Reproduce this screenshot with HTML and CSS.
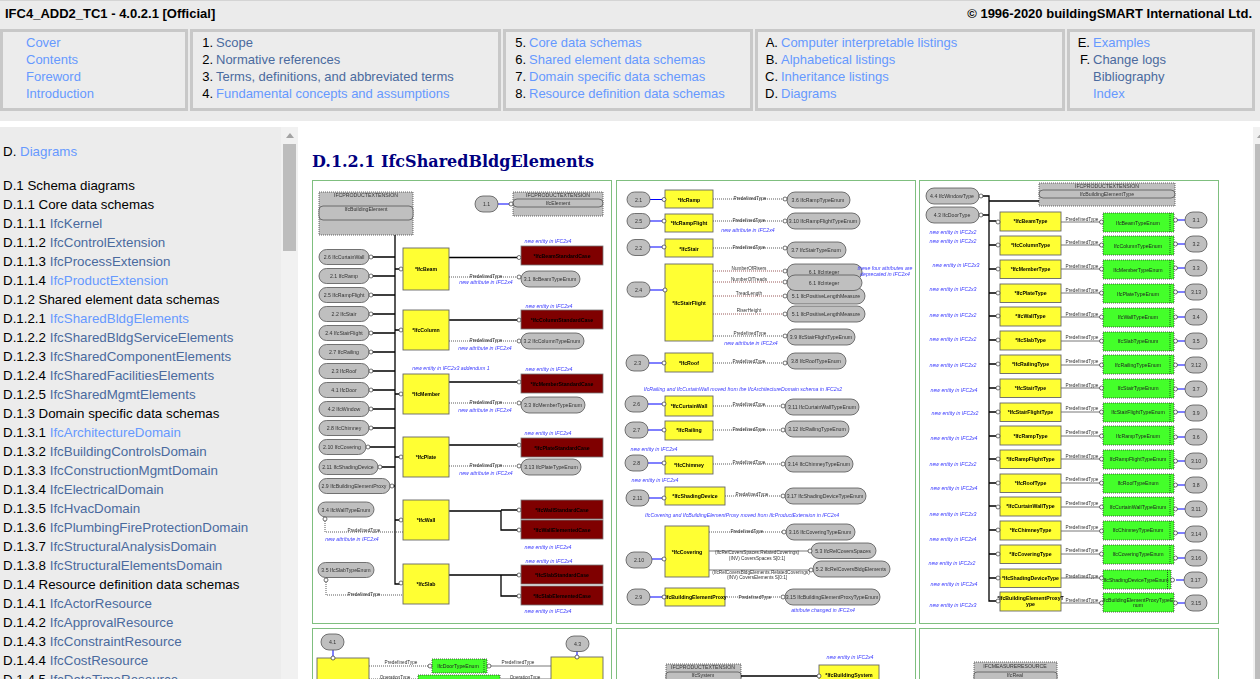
FILE: index.html
```html
<!DOCTYPE html>
<html lang="en">
<head>
  <meta charset="UTF-8">
  <meta name="viewport" content="width=device-width, initial-scale=1.0">
  <title>IfcSharedBldgElements</title>
  <link rel="stylesheet" href="styles.css">
</head>
<body>
  <div class="top">
    <div class="top-head">
      <span>IFC4_ADD2_TC1 - 4.0.2.1 [Official]</span>
      <span>© 1996-2020 buildingSMART International Ltd.</span>
    </div>
    <div class="nav">
      <div class="nav-box">
        <div class="nav-row"><i></i><a class="on" href="#">Cover</a></div>
        <div class="nav-row"><i></i><a class="on" href="#">Contents</a></div>
        <div class="nav-row"><i></i><a class="on" href="#">Foreword</a></div>
        <div class="nav-row"><i></i><a class="on" href="#">Introduction</a></div>
      </div>
      <div class="nav-box">
        <div class="nav-row"><i>1.</i><a class="off" href="#">Scope</a></div>
        <div class="nav-row"><i>2.</i><a class="off" href="#">Normative references</a></div>
        <div class="nav-row"><i>3.</i><a class="off" href="#">Terms, definitions, and abbreviated terms</a></div>
        <div class="nav-row"><i>4.</i><a class="on" href="#">Fundamental concepts and assumptions</a></div>
      </div>
      <div class="nav-box">
        <div class="nav-row"><i>5.</i><a class="on" href="#">Core data schemas</a></div>
        <div class="nav-row"><i>6.</i><a class="on" href="#">Shared element data schemas</a></div>
        <div class="nav-row"><i>7.</i><a class="on" href="#">Domain specific data schemas</a></div>
        <div class="nav-row"><i>8.</i><a class="on" href="#">Resource definition data schemas</a></div>
      </div>
      <div class="nav-box">
        <div class="nav-row"><i>A.</i><a class="on" href="#">Computer interpretable listings</a></div>
        <div class="nav-row"><i>B.</i><a class="on" href="#">Alphabetical listings</a></div>
        <div class="nav-row"><i>C.</i><a class="on" href="#">Inheritance listings</a></div>
        <div class="nav-row"><i>D.</i><a class="on" href="#">Diagrams</a></div>
      </div>
      <div class="nav-box">
        <div class="nav-row"><i>E.</i><a class="on" href="#">Examples</a></div>
        <div class="nav-row"><i>F.</i><a class="off" href="#">Change logs</a></div>
        <div class="nav-row"><i></i><a class="off" href="#">Bibliography</a></div>
        <div class="nav-row"><i></i><a class="on" href="#">Index</a></div>
      </div>
    </div>
  </div>

  <div class="frames">
    <div class="side">
      <div class="side-list">
        <div class="side-row side-title">D. <a class="on" href="#">Diagrams</a></div>
        <div class="side-row">D.1 Schema diagrams</div>
        <div class="side-row">D.1.1 Core data schemas</div>
        <div class="side-row">D.1.1.1 <a class="off" href="#">IfcKernel</a></div>
        <div class="side-row">D.1.1.2 <a class="off" href="#">IfcControlExtension</a></div>
        <div class="side-row">D.1.1.3 <a class="off" href="#">IfcProcessExtension</a></div>
        <div class="side-row">D.1.1.4 <a class="on" href="#">IfcProductExtension</a></div>
        <div class="side-row">D.1.2 Shared element data schemas</div>
        <div class="side-row">D.1.2.1 <a class="on" href="#">IfcSharedBldgElements</a></div>
        <div class="side-row">D.1.2.2 <a class="off" href="#">IfcSharedBldgServiceElements</a></div>
        <div class="side-row">D.1.2.3 <a class="off" href="#">IfcSharedComponentElements</a></div>
        <div class="side-row">D.1.2.4 <a class="off" href="#">IfcSharedFacilitiesElements</a></div>
        <div class="side-row">D.1.2.5 <a class="off" href="#">IfcSharedMgmtElements</a></div>
        <div class="side-row">D.1.3 Domain specific data schemas</div>
        <div class="side-row">D.1.3.1 <a class="on" href="#">IfcArchitectureDomain</a></div>
        <div class="side-row">D.1.3.2 <a class="off" href="#">IfcBuildingControlsDomain</a></div>
        <div class="side-row">D.1.3.3 <a class="off" href="#">IfcConstructionMgmtDomain</a></div>
        <div class="side-row">D.1.3.4 <a class="off" href="#">IfcElectricalDomain</a></div>
        <div class="side-row">D.1.3.5 <a class="off" href="#">IfcHvacDomain</a></div>
        <div class="side-row">D.1.3.6 <a class="off" href="#">IfcPlumbingFireProtectionDomain</a></div>
        <div class="side-row">D.1.3.7 <a class="off" href="#">IfcStructuralAnalysisDomain</a></div>
        <div class="side-row">D.1.3.8 <a class="off" href="#">IfcStructuralElementsDomain</a></div>
        <div class="side-row">D.1.4 Resource definition data schemas</div>
        <div class="side-row">D.1.4.1 <a class="off" href="#">IfcActorResource</a></div>
        <div class="side-row">D.1.4.2 <a class="off" href="#">IfcApprovalResource</a></div>
        <div class="side-row">D.1.4.3 <a class="off" href="#">IfcConstraintResource</a></div>
        <div class="side-row">D.1.4.4 <a class="off" href="#">IfcCostResource</a></div>
        <div class="side-row">D.1.4.5 <a class="off" href="#">IfcDateTimeResource</a></div>
      </div>
      <div class="bar"><div class="bar-up"></div><div class="bar-thumb"></div></div>
    </div>

    <div class="main">
      <div class="content">
        <h1>D.1.2.1 IfcSharedBldgElements</h1>
        <div class="diagrams">

          <!-- panel 1: viewBox uses page coords, easier to line up -->
          <svg class="dg" viewBox="312 180 300 444">
            <rect class="schema" x="319" y="192" width="94" height="43"/>
            <rect class="pill" x="319" y="206" width="94" height="14" rx="4"/>
            <text class="t" x="366" y="197">IFCPRODUCTEXTENSION</text>
            <text class="t" x="366" y="211">IfcBuildingElement</text>
            <rect class="schema" x="513" y="192" width="90" height="24"/>
            <rect class="pill" x="513" y="199" width="90" height="8" rx="4"/>
            <text class="t" x="558" y="197">IFCPRODUCTEXTENSION</text>
            <text class="t" x="558" y="205">IfcElement</text>
            <path class="thick" d="M498 204H510"/>
            <rect class="pill" x="475" y="196" width="23" height="16" rx="8"/>
            <text class="t" x="486.500" y="206">1.1</text>
            <circle class="c" cx="511" cy="204" r="2"/>

            <path class="blk" d="M395 235V584H401M371 257H395M371 276H395M371 295H395M371 314H395M371 333H395M371 352H395M371 371H395M371 390H395M371 409H395M371 428H395M368 447H395M380 467H395M392 486H395M395 269H401M395 330H401M395 394H401M395 457H401M395 520H401"/>
            <path class="blk" d="M449 257.500H519M449 320H519M449 382H519M449 445H519M449 511H501V530H519M501 510H519M449 575H501V596H519M501 575H519"/>
            <path class="dot" d="M449 277H519M449 341H519M449 403H519M449 466H519M325 519V532H403M326 580V595H403"/>

            <rect class="pill" x="319" y="249.500" width="50" height="15" rx="7.500"/><text class="t" x="344" y="259">2.6 IfcCurtainWall</text>
            <rect class="pill" x="319" y="268.500" width="50" height="15" rx="7.500"/><text class="t" x="344" y="278">2.1 IfcRamp</text>
            <rect class="pill" x="319" y="287.500" width="50" height="15" rx="7.500"/><text class="t" x="344" y="297">2.5 IfcRampFlight</text>
            <rect class="pill" x="319" y="306.500" width="50" height="15" rx="7.500"/><text class="t" x="344" y="316">2.2 IfcStair</text>
            <rect class="pill" x="319" y="325.500" width="50" height="15" rx="7.500"/><text class="t" x="344" y="335">2.4 IfcStairFlight</text>
            <rect class="pill" x="319" y="344.500" width="50" height="15" rx="7.500"/><text class="t" x="344" y="354">2.7 IfcRailing</text>
            <rect class="pill" x="319" y="363.500" width="50" height="15" rx="7.500"/><text class="t" x="344" y="373">2.3 IfcRoof</text>
            <rect class="pill" x="319" y="382.500" width="50" height="15" rx="7.500"/><text class="t" x="344" y="392">4.1 IfcDoor</text>
            <rect class="pill" x="319" y="401.500" width="50" height="15" rx="7.500"/><text class="t" x="344" y="411">4.2 IfcWindow</text>
            <rect class="pill" x="319" y="420.500" width="50" height="15" rx="7.500"/><text class="t" x="344" y="430">2.8 IfcChimney</text>
            <rect class="pill" x="319" y="439.500" width="47" height="15" rx="7.500"/><text class="t" x="342" y="449">2.10 IfcCovering</text>
            <rect class="pill" x="319" y="459.500" width="59" height="15" rx="7.500"/><text class="t" x="348" y="469">2.11 IfcShadingDevice</text>
            <rect class="pill" x="319" y="478.500" width="71" height="15" rx="7.500"/><text class="t" x="354" y="488">2.9 IfcBuildingElementProxy</text>
            <rect class="pill" x="318" y="502" width="56" height="15" rx="7.500"/><text class="t" x="346" y="511.500">3.4 IfcWallTypeEnum</text>
            <rect class="pill" x="318" y="562.500" width="56" height="15" rx="7.500"/><text class="t" x="346" y="572">3.5 IfcSlabTypeEnum</text>
            <g class="cs">
              <circle cx="371" cy="257" r="2"/><circle cx="371" cy="276" r="2"/><circle cx="371" cy="295" r="2"/><circle cx="371" cy="314" r="2"/><circle cx="371" cy="333" r="2"/><circle cx="371" cy="352" r="2"/><circle cx="371" cy="371" r="2"/><circle cx="371" cy="390" r="2"/><circle cx="371" cy="409" r="2"/><circle cx="371" cy="428" r="2"/><circle cx="368" cy="447" r="2"/><circle cx="380" cy="467" r="2"/><circle cx="392" cy="486" r="2"/><circle cx="325" cy="519" r="2"/><circle cx="326" cy="580" r="2"/>
              <circle cx="401" cy="269" r="2"/><circle cx="401" cy="330" r="2"/><circle cx="401" cy="394" r="2"/><circle cx="401" cy="457" r="2"/><circle cx="401" cy="520" r="2"/><circle cx="401" cy="583" r="2"/>
              <circle cx="519" cy="257.500" r="2"/><circle cx="519" cy="277" r="2"/><circle cx="519" cy="320" r="2"/><circle cx="519" cy="341" r="2"/><circle cx="519" cy="382" r="2"/><circle cx="519" cy="403" r="2"/><circle cx="519" cy="445" r="2"/><circle cx="519" cy="466" r="2"/><circle cx="519" cy="510" r="2"/><circle cx="519" cy="530" r="2"/><circle cx="519" cy="575" r="2"/><circle cx="519" cy="596" r="2"/>
            </g>

            <rect class="ent" x="403" y="248" width="46" height="42"/><text class="b" x="426" y="271">*IfcBeam</text>
            <rect class="ent" x="403" y="310" width="46" height="40"/><text class="b" x="426" y="332">*IfcColumn</text>
            <rect class="ent" x="403" y="374" width="46" height="40"/><text class="b" x="426" y="396">*IfcMember</text>
            <rect class="ent" x="403" y="437" width="46" height="40"/><text class="b" x="426" y="459">*IfcPlate</text>
            <rect class="ent" x="403" y="500" width="46" height="40"/><text class="b" x="426" y="522">*IfcWall</text>
            <rect class="ent" x="403" y="564" width="46" height="40"/><text class="b" x="426" y="586">*IfcSlab</text>

            <rect class="dark" x="521" y="246" width="82" height="19"/><text class="b" x="562" y="258">*IfcBeamStandardCase</text>
            <rect class="dark" x="521" y="310" width="82" height="19"/><text class="b" x="562" y="322">*IfcColumnStandardCase</text>
            <rect class="dark" x="521" y="374" width="82" height="19"/><text class="b" x="562" y="386">*IfcMemberStandardCase</text>
            <rect class="dark" x="521" y="438" width="82" height="19"/><text class="b" x="562" y="450">*IfcPlateStandardCase</text>
            <rect class="dark" x="521" y="500" width="82" height="19"/><text class="b" x="562" y="512">*IfcWallStandardCase</text>
            <rect class="dark" x="521" y="520" width="82" height="19"/><text class="b" x="562" y="532">*IfcWallElementedCase</text>
            <rect class="dark" x="521" y="565" width="82" height="19"/><text class="b" x="562" y="577">*IfcSlabStandardCase</text>
            <rect class="dark" x="521" y="586" width="82" height="19"/><text class="b" x="562" y="598">*IfcSlabElementedCase</text>

            <rect class="pill" x="521" y="271" width="59" height="16" rx="8"/><text class="t" x="550" y="281">3.1 IfcBeamTypeEnum</text>
            <rect class="pill" x="521" y="333" width="63" height="16" rx="8"/><text class="t" x="552" y="343">3.2 IfcColumnTypeEnum</text>
            <rect class="pill" x="521" y="397" width="64" height="16" rx="8"/><text class="t" x="553" y="407">3.3 IfcMemberTypeEnum</text>
            <rect class="pill" x="521" y="459" width="60" height="16" rx="8"/><text class="t" x="551" y="469">3.13 IfcPlateTypeEnum</text>

            <text class="l" x="486" y="278">PredefinedType</text>
            <text class="l" x="486" y="342">PredefinedType</text>
            <text class="l" x="486" y="404">PredefinedType</text>
            <text class="l" x="486" y="467">PredefinedType</text>
            <text class="l" x="364" y="532">PredefinedType</text>
            <text class="l" x="364" y="596">PredefinedType</text>

            <text class="n" x="548" y="243">new entity in IFC2x4</text>
            <text class="n" x="549" y="308">new entity in IFC2x4</text>
            <text class="n" x="549" y="371">new entity in IFC2x4</text>
            <text class="n" x="548" y="435">new entity in IFC2x4</text>
            <text class="n" x="548" y="549">new entity in IFC2x4</text>
            <text class="n" x="549" y="563">new entity in IFC2x4</text>
            <text class="n" x="548" y="613">new entity in IFC2x4</text>
            <text class="n" x="451" y="370">new entity in IFC2x3 addendum 1</text>
            <text class="n" x="486" y="284">new attribute in IFC2x4</text>
            <text class="n" x="485" y="350">new attribute in IFC2x4</text>
            <text class="n" x="485" y="412">new attribute in IFC2x4</text>
            <text class="n" x="486" y="475">new attribute in IFC2x4</text>
            <text class="n" x="352" y="541">new attribute in IFC2x4</text>
          </svg>

          <!-- panel 2 -->
          <svg class="dg" viewBox="616 180 300 444">
            <path class="blu" d="M650 199.500H664M649 247H664M649 363H664M648 404H664M648 430H664M649 498H664M652 559H664M650 597H664"/>
            <path class="thick" d="M650 221H664M650 290H664M648 463H664"/>
            <path class="dot" d="M713 199H785M713 221H785M713 248H785M713 336H785M713 363H785M713 406H785M713 430H785M713 464H785M725 496H785M709 532H785M725 597H785"/>
            <path class="red" d="M713 271H785M713 282H785M713 296H785M713 314H785"/>
            <path class="gry" d="M709 551H809M709 570H811"/>

            <rect class="pill" x="627" y="192" width="23" height="15" rx="7.500"/><text class="t" x="638.500" y="201.500">2.1</text>
            <rect class="pill" x="627" y="213.500" width="23" height="15" rx="7.500"/><text class="t" x="638.500" y="223">2.5</text>
            <rect class="pill" x="627" y="239.500" width="23" height="16" rx="8"/><text class="t" x="638.500" y="249.500">2.2</text>
            <rect class="pill" x="627" y="282" width="23" height="15" rx="7.500"/><text class="t" x="638.500" y="291.500">2.4</text>
            <rect class="pill" x="626" y="355" width="23" height="16" rx="8"/><text class="t" x="637.500" y="365">2.3</text>
            <rect class="pill" x="625" y="396" width="23" height="16" rx="8"/><text class="t" x="636.500" y="406">2.6</text>
            <rect class="pill" x="625" y="422" width="23" height="16" rx="8"/><text class="t" x="636.500" y="432">2.7</text>
            <rect class="pill" x="625" y="455" width="23" height="16" rx="8"/><text class="t" x="636.500" y="465">2.8</text>
            <rect class="pill" x="626" y="490" width="23" height="16" rx="8"/><text class="t" x="637.500" y="500">2.11</text>
            <rect class="pill" x="626" y="552" width="26" height="16" rx="8"/><text class="t" x="639" y="562">2.10</text>
            <rect class="pill" x="627" y="589" width="23" height="16" rx="8"/><text class="t" x="638.500" y="599">2.9</text>

            <rect class="ent" x="665" y="190" width="48" height="18"/><text class="b" x="689" y="202">*IfcRamp</text>
            <rect class="ent" x="665" y="214" width="48" height="18"/><text class="b" x="689" y="225">*IfcRampFlight</text>
            <rect class="ent" x="665" y="239" width="48" height="18"/><text class="b" x="689" y="251">*IfcStair</text>
            <rect class="ent" x="665" y="264" width="48" height="77"/><text class="b" x="689" y="305">*IfcStairFlight</text>
            <rect class="ent" x="665" y="353" width="48" height="19"/><text class="b" x="689" y="365">*IfcRoof</text>
            <rect class="ent" x="665" y="396" width="48" height="20"/><text class="b" x="689" y="408">*IfcCurtainWall</text>
            <rect class="ent" x="665" y="421" width="48" height="19"/><text class="b" x="689" y="432">*IfcRailing</text>
            <rect class="ent" x="665" y="456" width="48" height="18"/><text class="b" x="689" y="467">*IfcChimney</text>
            <rect class="ent" x="665" y="487" width="60" height="18"/><text class="b" x="695" y="498">*IfcShadingDevice</text>
            <rect class="ent" x="665" y="526" width="44" height="51"/><text class="b" x="687" y="554">*IfcCovering</text>
            <rect class="ent" x="665" y="588" width="60" height="18"/><text class="b" x="695" y="599">*IfcBuildingElementProxy</text>

            <rect class="pill" x="787" y="192" width="63" height="16" rx="8"/><text class="t" x="818" y="202">3.6 IfcRampTypeEnum</text>
            <rect class="pill" x="787" y="213" width="73" height="16" rx="8"/><text class="t" x="823" y="223">3.10 IfcRampFlightTypeEnum</text>
            <rect class="pill" x="787" y="242" width="59" height="16" rx="8"/><text class="t" x="816" y="252">3.7 IfcStairTypeEnum</text>
            <rect class="pill" x="787" y="264" width="75" height="16" rx="8"/><text class="t" x="824" y="274">6.1 IfcInteger</text>
            <rect class="pill" x="787" y="288" width="78" height="16" rx="8"/><text class="t" x="826" y="298">5.1 IfcPositiveLengthMeasure</text>
            <rect class="pill" x="787" y="275" width="75" height="15.500" rx="8"/><text class="t" x="824" y="285">6.1 IfcInteger</text>
            <rect class="pill" x="787" y="306" width="78" height="16" rx="8"/><text class="t" x="826" y="316">5.1 IfcPositiveLengthMeasure</text>
            <rect class="pill" x="787" y="329" width="68" height="16" rx="8"/><text class="t" x="821" y="339">3.9 IfcStairFlightTypeEnum</text>
            <rect class="pill" x="787" y="353" width="59" height="16" rx="8"/><text class="t" x="816" y="363">3.8 IfcRoofTypeEnum</text>
            <rect class="pill" x="785" y="399" width="74" height="16" rx="8"/><text class="t" x="822" y="409">3.11 IfcCurtainWallTypeEnum</text>
            <rect class="pill" x="785" y="421" width="64" height="16" rx="8"/><text class="t" x="817" y="431">3.12 IfcRailingTypeEnum</text>
            <rect class="pill" x="785" y="456" width="68" height="16" rx="8"/><text class="t" x="819" y="466">3.14 IfcChimneyTypeEnum</text>
            <rect class="pill" x="785" y="488" width="81" height="16" rx="8"/><text class="t" x="825" y="498">3.17 IfcShadingDeviceTypeEnum</text>
            <rect class="pill" x="786" y="524" width="69" height="16" rx="8"/><text class="t" x="820" y="534">3.16 IfcCoveringTypeEnum</text>
            <rect class="pill" x="811" y="543" width="65" height="15.500" rx="8"/><text class="t" x="843" y="553">5.3 IfcRelCoversSpaces</text>
            <rect class="pill" x="813" y="561" width="77" height="16" rx="8"/><text class="t" x="851" y="571">5.2 IfcRelCoversBldgElements</text>
            <rect class="pill" x="785" y="589" width="95" height="16" rx="8"/><text class="t" x="832" y="599">3.15 IfcBuildingElementProxyTypeEnum</text>

            <g class="cs">
              <circle cx="664" cy="199.500" r="2"/><circle cx="664" cy="221" r="2"/><circle cx="664" cy="247" r="2"/><circle cx="665" cy="290" r="2"/><circle cx="664" cy="363" r="2"/><circle cx="664" cy="404" r="2"/><circle cx="664" cy="430" r="2"/><circle cx="664" cy="463" r="2"/><circle cx="664" cy="498" r="2"/><circle cx="664" cy="559" r="2"/><circle cx="664" cy="597" r="2"/>
              <circle cx="785" cy="199" r="2"/><circle cx="785" cy="221" r="2"/><circle cx="785" cy="248" r="2"/><circle cx="785" cy="271" r="2"/><circle cx="785" cy="282" r="2"/><circle cx="785" cy="296" r="2"/><circle cx="785" cy="314" r="2"/><circle cx="785" cy="336" r="2"/><circle cx="785" cy="363" r="2"/><circle cx="783" cy="406" r="2"/><circle cx="783" cy="430" r="2"/><circle cx="783" cy="464" r="2"/><circle cx="783" cy="496" r="2"/><circle cx="784" cy="532" r="2"/><circle cx="810" cy="551" r="2"/><circle cx="811" cy="570" r="2"/><circle cx="783" cy="597" r="2"/>
            </g>

            <text class="l" x="750" y="200">PredefinedType</text>
            <text class="l" x="749" y="222">PredefinedType</text>
            <text class="l" x="749" y="249">PredefinedType</text>
            <text class="l" x="749" y="270">NumberOfRisers</text>
            <text class="l" x="749" y="281">NumberOfTreads</text>
            <text class="l" x="749" y="295">TreadLength</text>
            <text class="l" x="749" y="312">RiserHeight</text>
            <text class="l" x="750" y="335">PredefinedType</text>
            <text class="l" x="749" y="363">PredefinedType</text>
            <text class="l" x="749" y="406">PredefinedType</text>
            <text class="l" x="749" y="431">PredefinedType</text>
            <text class="l" x="749" y="464">PredefinedType</text>
            <text class="l" x="752" y="496">PredefinedType</text>
            <text class="l" x="747" y="533">PredefinedType</text>
            <text class="l" x="757" y="554">(IfcRelCoversSpaces.RelatedCoverings)</text>
            <text class="l" x="757" y="560">(INV) CoversSpaces S[0:1]</text>
            <text class="l" x="761" y="574">(IfcRelCoversBldgElements.RelatedCoverings)</text>
            <text class="l" x="757" y="579">(INV) CoversElements S[0:1]</text>
            <text class="l" x="755" y="599">PredefinedType</text>

            <text class="n" x="748" y="232">new attribute in IFC2x4</text>
            <text class="n" x="751" y="345">new attribute in IFC2x4</text>
            <text class="n" x="885" y="270">these four attributes are</text>
            <text class="n" x="885" y="276">deprecated in IFC2x4</text>
            <text class="n" x="743" y="391">IfcRailing and IfcCurtainWall moved from the IfcArchitectureDomain schema in IFC2x2</text>
            <text class="n" x="654" y="451">new entity in IFC2x4</text>
            <text class="n" x="655" y="482">new entity in IFC2x4</text>
            <text class="n" x="742" y="517">IfcCovering and IfcBuildingElementProxy moved from IfcProductExtension in IFC2x4</text>
            <text class="n" x="823" y="612">attribute changed in IFC2x4</text>
          </svg>

          <!-- panel 3 -->
          <svg class="dg" viewBox="919 180 300 444">
            <rect class="schema" x="1039" y="183" width="136" height="23"/>
            <rect class="pill" x="1039" y="190" width="136" height="8" rx="4"/>
            <text class="t" x="1107" y="188">IFCPRODUCTEXTENSION</text>
            <text class="t" x="1107" y="196">IfcBuildingElementType</text>
            <rect class="pill" x="926" y="188" width="53" height="16" rx="8"/><text class="t" x="952" y="198">4.4 IfcWindowType</text>
            <rect class="pill" x="926" y="207" width="53" height="16" rx="8"/><text class="t" x="952" y="217">4.3 IfcDoorType</text>
            <path class="blk" d="M981 196H989V601H996M981 215H989M989 201H1039M989 221H996M989 245H996M989 269H996M989 293H996M989 316H996M989 340H996M989 364H996M989 388H996M989 412H996M989 436H996M989 459H996M989 483H996M989 506H996M989 530H996M989 554H996M989 578H996"/>
            <path class="gry" d="M1061 222H1101M1061 245H1101M1061 269H1101M1061 293H1101M1061 317H1101M1061 341H1101M1061 365H1101M1061 388H1101M1061 412H1101M1061 436H1101M1061 459H1101M1061 483H1101M1061 507H1101M1061 531H1101M1061 554H1101M1061 578H1101M1061 603H1101"/>
            <path class="blu" d="M1177 220H1185M1177 244H1185M1177 268H1185M1177 292H1185M1177 412H1185M1177 437H1185M1177 461H1185M1177 485H1185M1177 603H1185"/>
            <path class="thick" d="M1177 317H1185M1177 341H1185M1177 365H1185M1177 389H1185M1177 509H1185M1177 533H1185M1177 558H1185M1176 580H1185"/>

            <rect class="ent" x="1000" y="212" width="61" height="19"/><text class="b" x="1030.500" y="223">*IfcBeamType</text>
            <rect class="ent" x="1000" y="236" width="61" height="19"/><text class="b" x="1030.500" y="247">*IfcColumnType</text>
            <rect class="ent" x="1000" y="260" width="61" height="18.500"/><text class="b" x="1030.500" y="271">*IfcMemberType</text>
            <rect class="ent" x="1000" y="284" width="61" height="18.500"/><text class="b" x="1030.500" y="295">*IfcPlateType</text>
            <rect class="ent" x="1000" y="307" width="61" height="19"/><text class="b" x="1030.500" y="318">*IfcWallType</text>
            <rect class="ent" x="1000" y="331" width="61" height="19"/><text class="b" x="1030.500" y="342">*IfcSlabType</text>
            <rect class="ent" x="1000" y="355" width="61" height="18.500"/><text class="b" x="1030.500" y="366">*IfcRailingType</text>
            <rect class="ent" x="1000" y="379" width="61" height="18.500"/><text class="b" x="1030.500" y="390">*IfcStairType</text>
            <rect class="ent" x="1000" y="403" width="61" height="18.500"/><text class="b" x="1030.500" y="414">*IfcStairFlightType</text>
            <rect class="ent" x="1000" y="426" width="61" height="19"/><text class="b" x="1030.500" y="438">*IfcRampType</text>
            <rect class="ent" x="1000" y="450" width="61" height="18.500"/><text class="b" x="1030.500" y="461">*IfcRampFlightType</text>
            <rect class="ent" x="1000" y="474" width="61" height="18.500"/><text class="b" x="1030.500" y="485">*IfcRoofType</text>
            <rect class="ent" x="1000" y="497" width="61" height="19"/><text class="b" x="1030.500" y="508">*IfcCurtainWallType</text>
            <rect class="ent" x="1000" y="521" width="61" height="19"/><text class="b" x="1030.500" y="532">*IfcChimneyType</text>
            <rect class="ent" x="1000" y="545" width="61" height="18.500"/><text class="b" x="1030.500" y="556">*IfcCoveringType</text>
            <rect class="ent" x="1000" y="569" width="61" height="18.500"/><text class="b" x="1030.500" y="580">*IfcShadingDeviceType</text>
            <rect class="ent" x="1000" y="592" width="61" height="19"/><text class="b" x="1030.500" y="600">*IfcBuildingElementProxyT</text><text class="b" x="1030.500" y="606">ype</text>

            <rect class="grn" x="1103" y="213" width="71" height="19"/><text class="g" x="1138" y="225">IfcBeamTypeEnum</text>
            <rect class="grn" x="1103" y="236" width="71" height="19"/><text class="g" x="1138" y="248">IfcColumnTypeEnum</text>
            <rect class="grn" x="1103" y="260" width="71" height="19"/><text class="g" x="1138" y="272">IfcMemberTypeEnum</text>
            <rect class="grn" x="1103" y="284" width="71" height="19"/><text class="g" x="1138" y="296">IfcPlateTypeEnum</text>
            <rect class="grn" x="1103" y="308" width="71" height="19"/><text class="g" x="1138" y="319">IfcWallTypeEnum</text>
            <rect class="grn" x="1103" y="332" width="71" height="19"/><text class="g" x="1138" y="343">IfcSlabTypeEnum</text>
            <rect class="grn" x="1103" y="355" width="71" height="19"/><text class="g" x="1138" y="367">IfcRailingTypeEnum</text>
            <rect class="grn" x="1103" y="379" width="71" height="19"/><text class="g" x="1138" y="390">IfcStairTypeEnum</text>
            <rect class="grn" x="1103" y="403" width="71" height="19"/><text class="g" x="1138" y="414">IfcStairFlightTypeEnum</text>
            <rect class="grn" x="1103" y="426" width="71" height="19"/><text class="g" x="1138" y="438">IfcRampTypeEnum</text>
            <rect class="grn" x="1103" y="450" width="71" height="19"/><text class="g" x="1138" y="461">IfcRampFlightTypeEnum</text>
            <rect class="grn" x="1103" y="474" width="71" height="19"/><text class="g" x="1138" y="485">IfcRoofTypeEnum</text>
            <rect class="grn" x="1103" y="497" width="71" height="19"/><text class="g" x="1138" y="509">IfcCurtainWallTypeEnum</text>
            <rect class="grn" x="1103" y="521" width="71" height="19"/><text class="g" x="1138" y="532">IfcChimneyTypeEnum</text>
            <rect class="grn" x="1103" y="545" width="71" height="19"/><text class="g" x="1138" y="556">IfcCoveringTypeEnum</text>
            <rect class="grn" x="1103" y="570" width="68" height="19"/><text class="g" x="1136" y="582">IfcShadingDeviceTypeEnum</text>
            <rect class="grn" x="1103" y="593" width="71" height="19"/><text class="g" x="1138" y="602">IfcBuildingElementProxyTypeE</text><text class="g" x="1138" y="607">num</text>
            <path class="strip" d="M1170 213V232M1170 236V255M1170 260V279M1170 284V303M1170 308V327M1170 332V351M1170 355V374M1170 379V398M1170 403V422M1170 426V445M1170 450V469M1170 474V493M1170 497V516M1170 521V540M1170 545V564M1167.500 570V589"/>

            <g class="cs">
              <circle cx="981" cy="196" r="2"/><circle cx="981" cy="215" r="2"/>
              <circle cx="998" cy="222" r="2"/><circle cx="998" cy="245" r="2"/><circle cx="998" cy="269" r="2"/><circle cx="998" cy="293" r="2"/><circle cx="998" cy="316" r="2"/><circle cx="998" cy="340" r="2"/><circle cx="998" cy="364" r="2"/><circle cx="998" cy="388" r="2"/><circle cx="998" cy="412" r="2"/><circle cx="998" cy="436" r="2"/><circle cx="998" cy="459" r="2"/><circle cx="998" cy="483" r="2"/><circle cx="998" cy="507" r="2"/><circle cx="998" cy="530" r="2"/><circle cx="998" cy="554" r="2"/><circle cx="998" cy="578" r="2"/><circle cx="998" cy="601" r="2"/>
              <circle cx="1101.500" cy="222" r="2"/><circle cx="1101.500" cy="245" r="2"/><circle cx="1101.500" cy="269" r="2"/><circle cx="1101.500" cy="293" r="2"/><circle cx="1101.500" cy="317" r="2"/><circle cx="1101.500" cy="341" r="2"/><circle cx="1101.500" cy="365" r="2"/><circle cx="1101.500" cy="388" r="2"/><circle cx="1101.500" cy="412" r="2"/><circle cx="1101.500" cy="436" r="2"/><circle cx="1101.500" cy="459" r="2"/><circle cx="1101.500" cy="483" r="2"/><circle cx="1101.500" cy="507" r="2"/><circle cx="1101.500" cy="531" r="2"/><circle cx="1101.500" cy="554" r="2"/><circle cx="1101.500" cy="578" r="2"/><circle cx="1101.500" cy="603" r="2"/>
              <circle cx="1175.500" cy="220" r="2"/><circle cx="1175.500" cy="244" r="2"/><circle cx="1175.500" cy="268" r="2"/><circle cx="1175.500" cy="292" r="2"/><circle cx="1175.500" cy="317" r="2"/><circle cx="1175.500" cy="341" r="2"/><circle cx="1175.500" cy="365" r="2"/><circle cx="1175.500" cy="389" r="2"/><circle cx="1175.500" cy="412" r="2"/><circle cx="1175.500" cy="437" r="2"/><circle cx="1175.500" cy="461" r="2"/><circle cx="1175.500" cy="485" r="2"/><circle cx="1175.500" cy="509" r="2"/><circle cx="1175.500" cy="533" r="2"/><circle cx="1175.500" cy="558" r="2"/><circle cx="1172.500" cy="580" r="2"/><circle cx="1175.500" cy="603" r="2"/>
            </g>

            <rect class="pill" x="1185" y="212" width="22" height="16" rx="8"/><text class="t" x="1196" y="222">3.1</text>
            <rect class="pill" x="1185" y="236" width="22" height="16" rx="8"/><text class="t" x="1196" y="246">3.2</text>
            <rect class="pill" x="1185" y="260" width="22" height="16" rx="8"/><text class="t" x="1196" y="270">3.3</text>
            <rect class="pill" x="1185" y="284" width="22" height="16" rx="8"/><text class="t" x="1196" y="294">3.13</text>
            <rect class="pill" x="1185" y="309" width="22" height="16" rx="8"/><text class="t" x="1196" y="319">3.4</text>
            <rect class="pill" x="1185" y="333" width="22" height="16" rx="8"/><text class="t" x="1196" y="343">3.5</text>
            <rect class="pill" x="1185" y="357" width="22" height="16" rx="8"/><text class="t" x="1196" y="367">3.12</text>
            <rect class="pill" x="1185" y="381" width="22" height="16" rx="8"/><text class="t" x="1196" y="391">3.7</text>
            <rect class="pill" x="1185" y="405" width="22" height="16" rx="8"/><text class="t" x="1196" y="415">3.9</text>
            <rect class="pill" x="1185" y="429" width="22" height="16" rx="8"/><text class="t" x="1196" y="439">3.6</text>
            <rect class="pill" x="1185" y="453" width="22" height="16" rx="8"/><text class="t" x="1196" y="463">3.10</text>
            <rect class="pill" x="1185" y="477" width="22" height="16" rx="8"/><text class="t" x="1196" y="487">3.8</text>
            <rect class="pill" x="1185" y="501" width="22" height="16" rx="8"/><text class="t" x="1196" y="511">3.11</text>
            <rect class="pill" x="1185" y="526" width="22" height="16" rx="8"/><text class="t" x="1196" y="536">3.14</text>
            <rect class="pill" x="1185" y="550" width="22" height="16" rx="8"/><text class="t" x="1196" y="560">3.16</text>
            <rect class="pill" x="1184" y="572" width="23" height="16" rx="8"/><text class="t" x="1195.500" y="582">3.17</text>
            <rect class="pill" x="1185" y="595" width="22" height="16" rx="8"/><text class="t" x="1196" y="605">3.15</text>

            <text class="l" x="1082" y="221">PredefinedType</text>
            <text class="l" x="1082" y="244">PredefinedType</text>
            <text class="l" x="1082" y="268">PredefinedType</text>
            <text class="l" x="1082" y="292">PredefinedType</text>
            <text class="l" x="1082" y="316">PredefinedType</text>
            <text class="l" x="1082" y="339">PredefinedType</text>
            <text class="l" x="1082" y="363">PredefinedType</text>
            <text class="l" x="1082" y="387">PredefinedType</text>
            <text class="l" x="1082" y="410">PredefinedType</text>
            <text class="l" x="1082" y="434">PredefinedType</text>
            <text class="l" x="1082" y="458">PredefinedType</text>
            <text class="l" x="1082" y="481">PredefinedType</text>
            <text class="l" x="1082" y="505">PredefinedType</text>
            <text class="l" x="1082" y="529">PredefinedType</text>
            <text class="l" x="1082" y="552">PredefinedType</text>
            <text class="l" x="1082" y="578">PredefinedType</text>
            <text class="l" x="1082" y="602">PredefinedType</text>

            <text class="n" x="953" y="234">new entity in IFC2x2</text>
            <text class="n" x="953" y="243">new entity in IFC2x2</text>
            <text class="n" x="956" y="267">new entity in IFC2x3</text>
            <text class="n" x="953" y="291">new entity in IFC2x3</text>
            <text class="n" x="953" y="317">new entity in IFC2x2</text>
            <text class="n" x="953" y="341">new entity in IFC2x2</text>
            <text class="n" x="953" y="367">new entity in IFC2x2</text>
            <text class="n" x="954" y="392">new entity in IFC2x4</text>
            <text class="n" x="955" y="415">new entity in IFC2x2</text>
            <text class="n" x="954" y="440">new entity in IFC2x4</text>
            <text class="n" x="953" y="466">new entity in IFC2x2</text>
            <text class="n" x="954" y="490">new entity in IFC2x4</text>
            <text class="n" x="953" y="516">new entity in IFC2x3</text>
            <text class="n" x="953" y="541">new entity in IFC2x4</text>
            <text class="n" x="952" y="565">new entity in IFC2x2</text>
            <text class="n" x="954" y="586">new entity in IFC2x4</text>
            <text class="n" x="953" y="607">new entity in IFC2x3</text>
          </svg>

          <!-- second row, cut off by the frame -->
          <svg class="dg" viewBox="312 628 300 444">
            <path class="blu" d="M333 650V658"/>
            <path class="thick" d="M577 651V657"/>
            <path class="dot" d="M369 666H430M369 679H416"/>
            <path class="gry" d="M489 666H551M500 679H551"/>
            <rect class="pill" x="321" y="634" width="23" height="16" rx="8"/><text class="t" x="332.500" y="644">4.1</text>
            <rect class="pill" x="566" y="636" width="23" height="15.500" rx="8"/><text class="t" x="577.500" y="646">4.3</text>
            <rect class="ent" x="317" y="658" width="52" height="50"/>
            <rect class="ent" x="551" y="657" width="52" height="50"/>
            <rect class="grn" x="432" y="659" width="55" height="14"/><text class="g" x="458" y="668">IfcDoorTypeEnum</text>
            <path class="strip" d="M484 659V673"/>
            <rect class="grn" x="418" y="675" width="82" height="20"/>
            <g class="cs"><circle cx="333" cy="658" r="2"/><circle cx="577" cy="657" r="2"/><circle cx="430" cy="666" r="2"/><circle cx="489" cy="666" r="2"/></g>
            <text class="l" x="401" y="664">PredefinedType</text>
            <text class="l" x="518" y="664">PredefinedType</text>
            <text class="l" x="395" y="679">OperationType</text>
            <text class="l" x="525" y="679">OperationType</text>
          </svg>

          <svg class="dg" viewBox="616 628 300 444">
            <text class="n" x="850" y="659">new entity in IFC2x4</text>
            <rect class="schema" x="666" y="664" width="75" height="30"/>
            <rect class="pill" x="666" y="672" width="75" height="14" rx="3"/>
            <text class="t" x="703" y="669">IFCPRODUCTEXTENSION</text>
            <text class="t" x="703" y="677">IfcSystem</text>
            <path class="blk" d="M741 676H818"/>
            <rect class="ent" x="819" y="665" width="60" height="30"/>
            <text class="b" x="849" y="677">*IfcBuildingSystem</text>
            <g class="cs"><circle cx="819" cy="676" r="2"/></g>
          </svg>

          <svg class="dg" viewBox="919 628 300 444">
            <rect class="schema" x="974" y="662" width="83" height="30"/>
            <rect class="pill" x="974" y="672" width="83" height="14" rx="3"/>
            <text class="t" x="1015" y="668">IFCMEASURERESOURCE</text>
            <text class="t" x="1015" y="677">IfcReal</text>
          </svg>

        </div>
      </div>
      <div class="bar bar-main"><div class="bar-up"></div><div class="bar-thumb"></div></div>
    </div>
  </div>
</body>
</html>
```

FILE: styles.css
```css
html, body { margin: 0; height: 679px; overflow: hidden; background: #fff; }
body { font-family: "Liberation Sans", Arial, sans-serif; font-size: 13px; color: #000; }
a { text-decoration: none; }
.on { color: #6699ff; }
.off { color: #4a6a9e; }

.top { height: 120px; background: #ebebeb; border-top: 1px solid #d4d4d4; box-sizing: content-box; }
.top-head { display: flex; justify-content: space-between; height: 28px; line-height: 25px; padding: 0 8px 0 5px; font-weight: bold; }
.nav { display: grid; grid-template-columns: 188px 311px 250px 310px 188px; column-gap: 2px; }
.nav-box { border: 3px solid #c8c8c8; height: 73px; padding: 2px 0 1px; line-height: 17px; background: #ececec; }
.nav-row { display: flex; }
.nav-row i { font-style: normal; width: 23px; text-align: right; padding-right: 3px; box-sizing: border-box; flex: none; }

.frames { display: flex; height: 558px; padding-top: 6px; box-sizing: content-box; }
.side { width: 298px; flex: none; display: flex; background: #f1f1f1; }
.side-list { flex: 1; background: #ececec; padding: 15px 0 0 3px; overflow: hidden; }
.side-row { line-height: 19px; white-space: nowrap; font-size: 13.33px; }
.side-title { margin-bottom: 15px; }

.bar { width: 17px; flex: none; background: #f1f1f1; padding: 0 2px; box-sizing: border-box; overflow: hidden; }
.bar-up { width: 0; margin: 6px auto 0; border: 4px solid transparent; border-top: 0; border-bottom: 5px solid #a3a3a3; }
.bar-thumb { background: #bdbdbd; height: 107px; margin-top: 6px; }
.bar-main { width: 7px; padding: 0 0 0 2px; }
.bar-main .bar-thumb { width: 13px; height: 536px; }
.bar-main .bar-up { margin-left: 2px; }

.main { flex: 1; display: flex; min-width: 0; overflow: hidden; }
.content { flex: 1; padding: 0 0 0 14px; overflow: hidden; }
h1 { margin: 0; height: 53px; padding-top: 24px; box-sizing: border-box; line-height: 21px; font-family: "DejaVu Serif", serif; font-size: 16px; font-weight: bold; color: #000080; }

.diagrams { display: grid; grid-template-columns: 304px 303px 300px; row-gap: 4px; }
.dg { display: block; width: 300px; height: 444px; outline: 1px solid #7fbf7f; outline-offset: -1px; filter: blur(0.35px); }

.dg text { font-family: "Liberation Sans", Arial, sans-serif; font-size: 5.2px; text-anchor: middle; }
.dg .l { font-size: 4.7px; }
.t, .l { fill: #333; }
.g { fill: #222; }
.b { fill: #000; font-weight: bold; }
.n { fill: #3a3aff; font-style: italic; }

.pill { fill: #bfbfbf; stroke: #555; stroke-width: 0.8; }
.schema { fill: #bfbfbf; stroke: #444; stroke-width: 0.8; stroke-dasharray: 1 1; }
.ent { fill: #ffff33; stroke: #666; stroke-width: 0.9; }
.dark { fill: #7f0000; stroke: #777; stroke-width: 0.8; }
.grn { fill: #44ff2a; stroke: #333; stroke-width: 0.8; stroke-dasharray: 1 1; }
.strip { fill: none; stroke: #224422; stroke-width: 0.9; stroke-dasharray: 1 1; }

path { fill: none; }
.blk { stroke: #000; stroke-width: 1.3; }
.gry { stroke: #555; stroke-width: 0.8; }
.dot { stroke: #333; stroke-width: 0.8; stroke-dasharray: 1 1; }
.red { stroke: #803030; stroke-width: 0.8; stroke-dasharray: 1 1; }
.blu { stroke: #0000ff; stroke-width: 1; }
.thick { stroke: #8080ff; stroke-width: 2; }
.cs circle, .c { fill: #fff; stroke: #333; stroke-width: 0.7; }
```
